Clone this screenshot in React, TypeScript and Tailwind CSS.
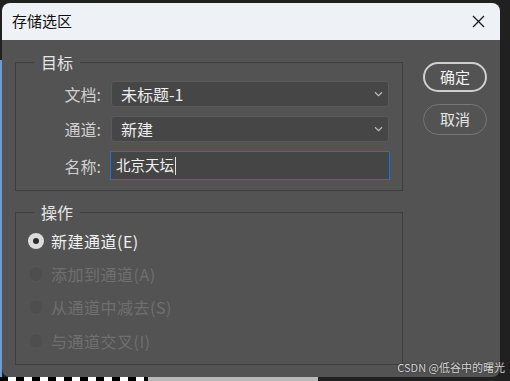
// 存储选区 — Photoshop "Save Selection" dialog

function Chevron() {
  return (
    <svg width="9" height="6" viewBox="0 0 9 6" fill="none">
      <path d="M1 1.2 L4.5 4.6 L8 1.2" stroke="#bdbdbd" strokeWidth="1.2" />
    </svg>
  );
}

function Select({ value }: { value: string }) {
  return (
    <div className="w-[278px] h-[26px] rounded-[3px] bg-[#464646] border border-[#5a5a5a] flex items-center justify-between pl-[9px] pr-[5px]">
      <span className="text-[16px] leading-none text-[#ededed]">{value}</span>
      <Chevron />
    </div>
  );
}

function Row({ label, children }: { label: string; children: React.ReactNode }) {
  return (
    <div className="flex items-center">
      <span className="w-[86px] text-right text-[16px] leading-none text-[#cfcfcf] pr-[1px]">{label}</span>
      <div className="ml-[9px]">{children}</div>
    </div>
  );
}

function Radio({ label, checked }: { label: string; checked?: boolean }) {
  return (
    <div className="h-[33.3px] flex items-center gap-[7px]">
      {checked ? (
        <span className="w-[16px] h-[16px] rounded-full bg-[#dcdcdc] flex items-center justify-center">
          <span className="w-[6px] h-[6px] rounded-full bg-[#2b2b2b]" />
        </span>
      ) : (
        <span className="w-[16px] h-[16px] rounded-full bg-[#4e4e4e] border border-[#575757]" />
      )}
      <span className={`text-[16px] leading-none tracking-[0.5px] ${checked ? 'text-[#f0f0f0]' : 'text-[#6f6f6f]'}`}>
        {label}
      </span>
    </div>
  );
}

export default function App() {
  return (
    <div className="relative w-[510px] h-[381px] bg-[#202020] flex flex-col overflow-hidden font-['Noto_Sans_CJK_SC','Noto_Sans',sans-serif]">
      <div className="h-[3px]" />
      <div className="flex h-[374px]">
        {/* window behind, left edge */}
        <div className="w-[2px] flex flex-col">
          <div className="h-[57px]" />
          <div className="flex-1 bg-[#6f9bd1]" />
        </div>

        {/* Dialog */}
        <div className="w-[498px] rounded-[8px] overflow-hidden flex flex-col">
          <div className="h-[37px] bg-[#eef2f7] flex items-center justify-between pl-[10px] pr-[15px]">
            <span className="text-[15px] text-[#111]">存储选区</span>
            <svg width="13" height="13" viewBox="0 0 13 13">
              <path d="M1 1 L12 12 M12 1 L1 12" stroke="#1a1a1a" strokeWidth="1.3" />
            </svg>
          </div>

          <div className="flex-1 bg-[#535353] flex pl-[13px] pt-[12px]">
            <div className="w-[388px] flex flex-col">
              {/* 目标 */}
              <fieldset className="border border-[#3e3e3e] pr-[12px] pb-[10px]">
                <legend className="ml-[18px] px-[7px] text-[16px] leading-[20px] text-[#e6e6e6]">目标</legend>
                <div className="flex flex-col gap-[9px] pt-[9px]">
                  <Row label="文档:">
                    <Select value="未标题-1" />
                  </Row>
                  <Row label="通道:">
                    <Select value="新建" />
                  </Row>
                  <Row label="名称:">
                    <div className="-ml-[1px] w-[280px] h-[29px] bg-[#454545] border border-[#1473e6] flex items-center pl-[5px]">
                      <span className="text-[14.5px] leading-none text-[#f2f2f2]">北京天坛</span>
                      <span className="w-[1px] h-[18px] bg-[#e0e0e0] ml-[1px]" />
                    </div>
                  </Row>
                </div>
              </fieldset>

              {/* 操作 */}
              <fieldset className="mt-[11px] border border-[#3e3e3e] pl-[12px] pb-[7px]">
                <legend className="ml-[6px] px-[7px] text-[16px] leading-[20px] text-[#e6e6e6]">操作</legend>
                <div className="flex flex-col pt-[2px]">
                  <Radio label="新建通道(E)" checked />
                  <Radio label="添加到通道(A)" />
                  <Radio label="从通道中减去(S)" />
                  <Radio label="与通道交叉(I)" />
                </div>
              </fieldset>
            </div>

            <div className="ml-[20px] mt-[10px] flex flex-col gap-[12px]">
              <button className="w-[64px] h-[30px] rounded-full border-2 border-[#cfcfcf] text-[15px] text-[#f2f2f2] flex items-center justify-center">
                确定
              </button>
              <button className="w-[64px] h-[31px] rounded-full border-[1.5px] border-[#767676] text-[15px] text-[#e6e6e6] flex items-center justify-center">
                取消
              </button>
            </div>
          </div>
        </div>
      </div>

      {/* selection edge of the document behind */}
      <div className="flex h-[4px]">
        <div className="w-[148px] bg-[repeating-linear-gradient(to_right,#000_0px,#000_8px,#fff_8px,#fff_16px)]" />
        <div className="w-[170px] bg-[#b9b9b9]" />
      </div>

      <span className="absolute right-[5px] top-[362px] text-[11px] leading-none text-[#d4d4d4] [text-shadow:0_0_2px_#222]">
        CSDN @低谷中的曙光
      </span>
    </div>
  );
}
